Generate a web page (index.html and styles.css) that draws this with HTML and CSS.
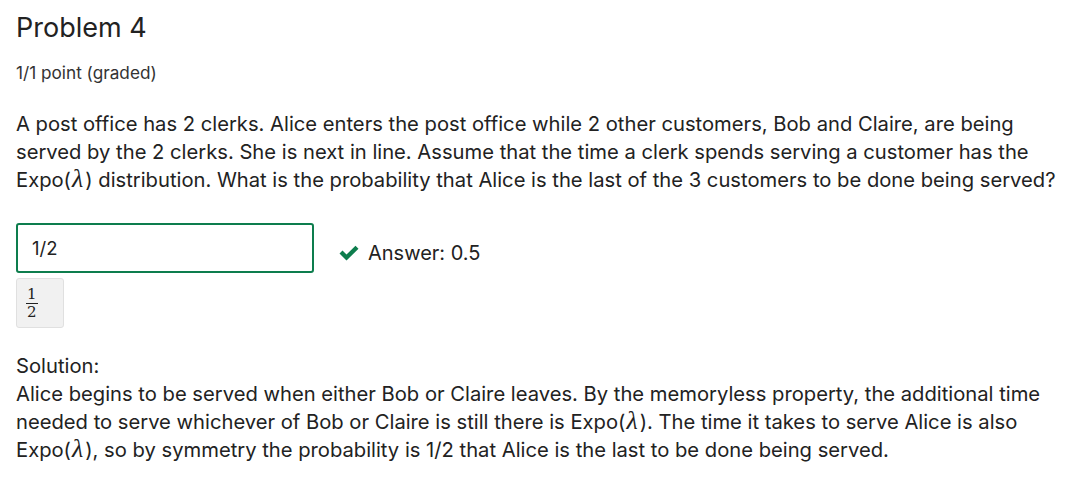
FILE: index.html
```html
<!DOCTYPE html>
<html>
<head>
<meta charset="utf-8">
<link rel="stylesheet" href="styles.css">
</head>
<body>
<div class="problem">
  <h3 class="title">Problem 4</h3>
  <div class="points">1/1 point (graded)</div>
  <p class="question">A post office has 2 clerks. Alice enters the post office while 2 other customers, Bob and Claire, are being served by the 2 clerks. She is next in line. Assume that the time a clerk spends serving a customer has the Expo(<span class="lam">λ</span>) distribution. What is the probability that Alice is the last of the 3 customers to be done being served?</p>
  <div class="answer-row">
    <div class="input">1/2</div>
    <div class="status">
      <svg class="check" viewBox="0 0 22 16" width="22" height="16"><path d="M1.5 8.5 L4.5 5.5 L8.5 9.5 L17.5 0.8 L20.5 3.8 L8.5 15.5 Z" fill="#0d7d4d"/></svg>
      <span>Answer: 0.5</span>
    </div>
  </div>
  <div class="preview">
    <span class="frac"><span class="num">1</span><span class="den">2</span></span>
  </div>
  <div class="solution">
    <div>Solution:</div>
    <p>Alice begins to be served when either Bob or Claire leaves. By the memoryless property, the additional time needed to serve whichever of Bob or Claire is still there is Expo(<span class="lam">λ</span>). The time it takes to serve Alice is also Expo(<span class="lam">λ</span>), so by symmetry the probability is 1/2 that Alice is the last to be done being served.</p>
  </div>
</div>
</body>
</html>
```
FILE: styles.css
```css
html, body {
  margin: 0;
  padding: 0;
  background: #fff;
}
body {
  font-family: Inter, "Noto Sans", sans-serif;
  color: #222;
}
.problem {
  padding: 10px 16px;
}
.title {
  margin: 0;
  font-size: 27px;
  font-weight: 400;
  line-height: 36px;
  color: #222;
}
.points {
  margin-top: 17px;
  font-size: 17.2px;
  line-height: 20px;
  color: #333;
}
.question {
  margin: 27px 0 0;
  font-size: 20.2px;
  line-height: 28px;
}
.lam {
  font-family: "Liberation Serif", "DejaVu Serif", serif;
  font-style: italic;
  font-size: 26px;
  line-height: 1;
  padding: 0 2px 0 1px;
}
.answer-row {
  display: flex;
  align-items: center;
  margin-top: 29px;
}
.input {
  box-sizing: border-box;
  width: 298px;
  height: 50px;
  border: 2px solid #0d7d4d;
  border-radius: 3px;
  padding: 0 14px 1px;
  display: flex;
  align-items: center;
  font-size: 18.5px;
}
.status {
  display: flex;
  align-items: center;
  margin-left: 24px;
  margin-top: 10px;
  font-size: 20px;
}
.check {
  margin-right: 8px;
}
.preview {
  box-sizing: border-box;
  width: 48px;
  height: 50px;
  margin-top: 5px;
  background: #f1f1f1;
  border: 1px solid #e0e0e0;
  border-radius: 3px;
  display: flex;
  align-items: center;
  padding-left: 9px;
}
.frac {
  display: inline-flex;
  flex-direction: column;
  align-items: center;
  font-family: "DejaVu Serif", "Liberation Serif", serif;
  font-size: 15px;
  line-height: 15px;
}
.num {
  border-bottom: 1px solid #222;
  padding: 0 1px 1px;
}
.den {
  padding-top: 1px;
}
.solution {
  margin-top: 24px;
  font-size: 20.2px;
  line-height: 28px;
}
.solution p {
  margin: 0;
}
```
